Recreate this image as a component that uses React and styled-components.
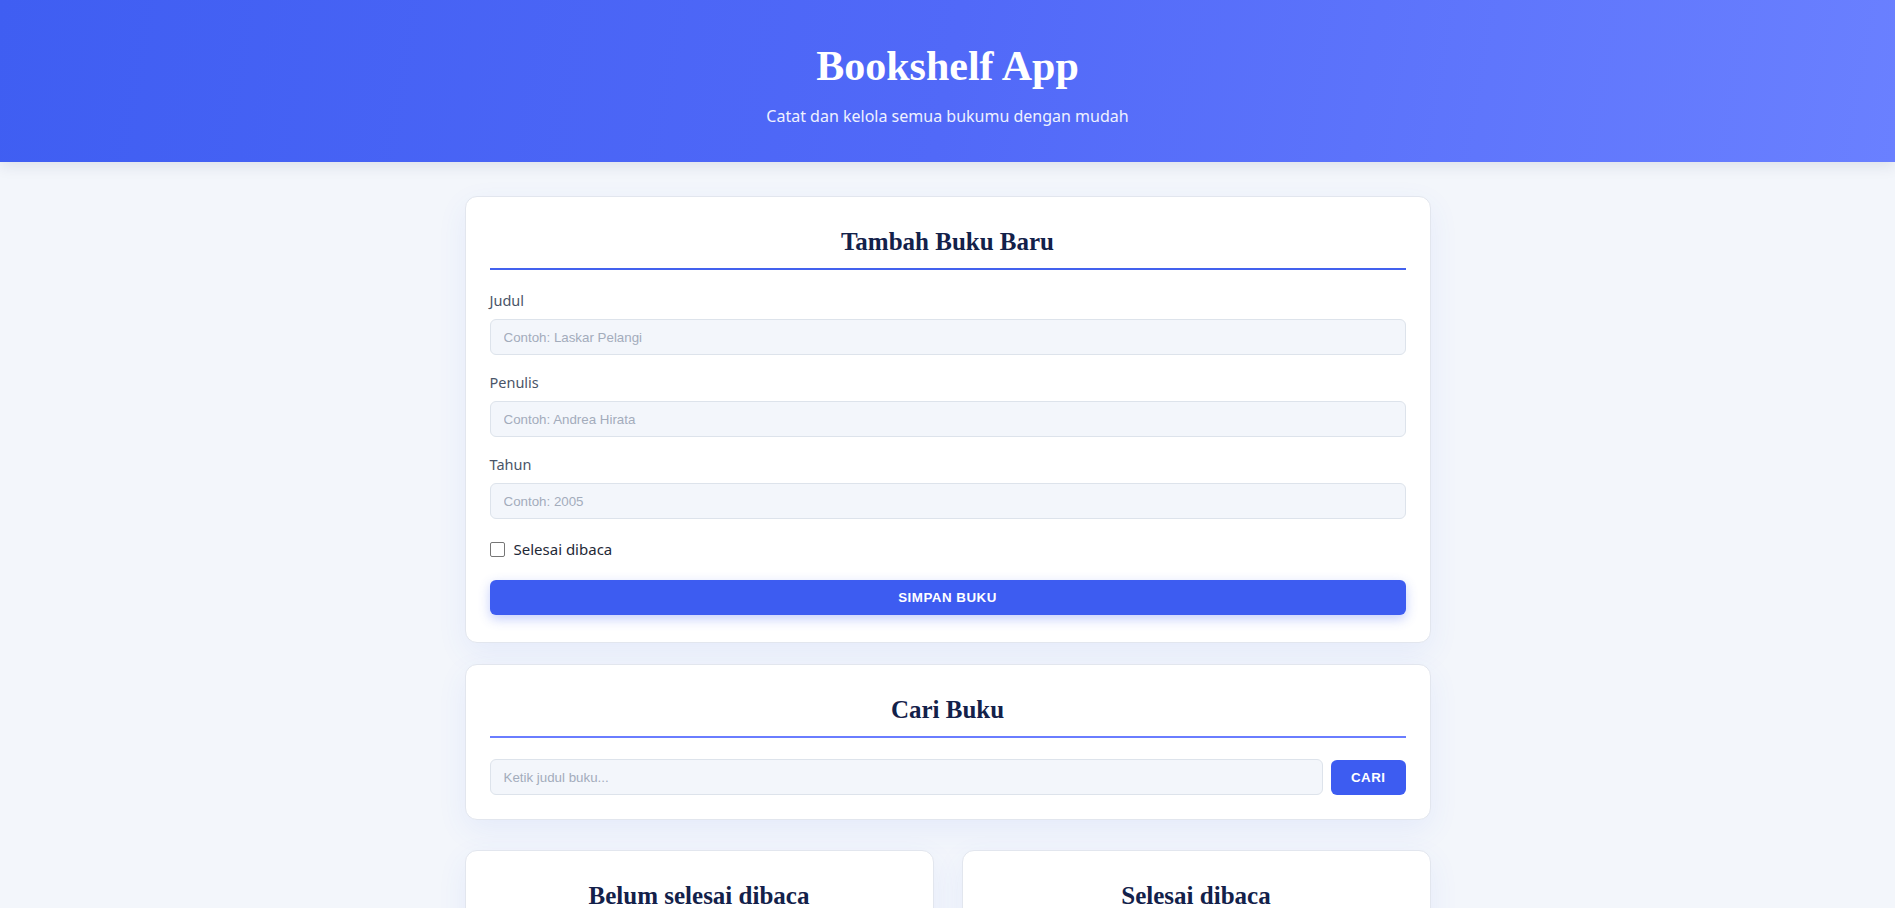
import React, { useState } from 'react';
import styled, { createGlobalStyle } from 'styled-components';

const GlobalStyle = createGlobalStyle`
  * { box-sizing: border-box; }
  body {
    margin: 0;
    background: #f3f6fb;
    font-family: "Noto Sans", "Open Sans", sans-serif;
    color: #2d3748;
  }
`;

const Header = styled.header`
  height: 162px;
  background: linear-gradient(100deg, #3f5ef2 0%, #5169f8 50%, #6a80ff 100%);
  box-shadow: 0 4px 14px rgba(30, 40, 80, 0.1);
  color: #fff;
  text-align: center;
  padding-top: 39px;
`;

const Title = styled.h1`
  margin: 0;
  font-family: "Liberation Serif", "Times New Roman", serif;
  font-weight: 700;
  font-size: 42px;
  line-height: 54px;
`;

const Subtitle = styled.p`
  margin: 12px 0 0;
  font-size: 16px;
  line-height: 22px;
  color: #eef1ff;
`;

const Main = styled.main`
  width: 966px;
  margin: 0 auto;
  padding: 34px 0 40px;
`;

const Card = styled.section`
  background: #fff;
  border: 1px solid #e2e6ee;
  border-radius: 12px;
  box-shadow: 0 10px 30px rgba(67, 97, 238, 0.08);
  padding: 24px 24px ${p => p.$bottom || 24}px;
  margin-bottom: ${p => p.$gap || 0}px;
`;

const CardTitle = styled.h2`
  margin: 6px 0 ${p => p.$after || 20}px;
  padding-bottom: 11px;
  border-bottom: 2px solid ${p => p.$line || '#4361ee'};
  text-align: center;
  font-family: "Liberation Serif", "Times New Roman", serif;
  font-weight: 700;
  font-size: 25px;
  line-height: 30px;
  color: #13214a;
`;

const Field = styled.div`
  margin-bottom: 17px;
`;

const Label = styled.label`
  display: block;
  margin-bottom: 8px;
  font-size: 14.5px;
  line-height: 21px;
  color: #4a5568;
`;

const Input = styled.input`
  display: block;
  width: 100%;
  height: 36px;
  padding: 0 13px;
  border: 1px solid #dde3eb;
  border-radius: 6px;
  background: #f3f6fb;
  font-family: "Liberation Sans", Arial, sans-serif;
  font-size: 13.33px;
  color: #2d3748;
  outline: none;
  flex: 1;
  &::placeholder { color: #a3acbb; }
`;

const CheckRow = styled.label`
  display: flex;
  align-items: center;
  gap: 9px;
  margin: 20px 0 20px;
  font-size: 15px;
  line-height: 21px;
  color: #1f2937;
  cursor: pointer;
`;

const Box = styled.span`
  width: 15px;
  height: 15px;
  border: 1.5px solid #767676;
  border-radius: 2px;
  background: ${p => (p.$on ? '#3d5af1' : '#fff')};
`;

const Button = styled.button`
  height: 35px;
  padding: 0 20px;
  width: ${p => (p.$full ? '100%' : 'auto')};
  border: none;
  border-radius: 6px;
  background: #3d5cf1;
  color: #fff;
  font-family: "Liberation Sans", Arial, sans-serif;
  font-weight: 700;
  font-size: 13.33px;
  letter-spacing: 0.5px;
  box-shadow: ${p => (p.$full ? '0 4px 12px rgba(61, 92, 241, 0.3)' : 'none')};
  cursor: pointer;
`;

const SearchRow = styled.div`
  display: flex;
  gap: 8px;
  align-items: center;
`;

const Shelves = styled.div`
  display: grid;
  grid-template-columns: 1fr 1fr;
  gap: 28px;
  margin-top: 30px;
`;

const Empty = styled.p`
  margin: 0;
  text-align: center;
  font-size: 14px;
  color: #8a94a6;
`;

export default function App() {
  const [done, setDone] = useState(false);
  return (
    <>
      <GlobalStyle />
      <Header>
        <Title>Bookshelf App</Title>
        <Subtitle>Catat dan kelola semua bukumu dengan mudah</Subtitle>
      </Header>
      <Main>
        <Card $gap={21} $bottom={27}>
          <CardTitle $line="#4361ee">Tambah Buku Baru</CardTitle>
          <Field>
            <Label htmlFor="judul">Judul</Label>
            <Input id="judul" placeholder="Contoh: Laskar Pelangi" />
          </Field>
          <Field>
            <Label htmlFor="penulis">Penulis</Label>
            <Input id="penulis" placeholder="Contoh: Andrea Hirata" />
          </Field>
          <Field>
            <Label htmlFor="tahun">Tahun</Label>
            <Input id="tahun" placeholder="Contoh: 2005" />
          </Field>
          <CheckRow onClick={() => setDone(!done)}>
            <Box $on={done} />
            Selesai dibaca
          </CheckRow>
          <Button $full>SIMPAN BUKU</Button>
        </Card>

        <Card>
          <CardTitle $line="#6a7dff" $after={21}>Cari Buku</CardTitle>
          <SearchRow>
            <Input placeholder="Ketik judul buku..." />
            <Button>CARI</Button>
          </SearchRow>
        </Card>

        <Shelves>
          <Card>
            <CardTitle $line="#6a7dff">Belum selesai dibaca</CardTitle>
            <Empty>Belum ada buku.</Empty>
          </Card>
          <Card>
            <CardTitle $line="#6a7dff">Selesai dibaca</CardTitle>
            <Empty>Belum ada buku.</Empty>
          </Card>
        </Shelves>
      </Main>
    </>
  );
}
